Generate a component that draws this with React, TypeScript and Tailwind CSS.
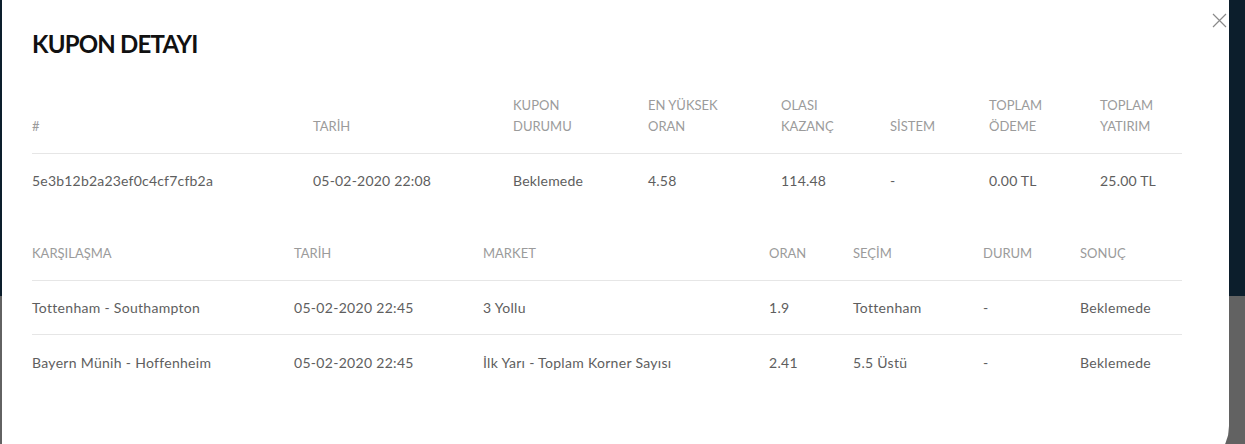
import React from 'react';

const couponCols = ['w-[281px]', 'w-[200px]', 'w-[135px]', 'w-[133px]', 'w-[109px]', 'w-[99px]', 'w-[111px]', 'w-[82px]'];
const couponHead: React.ReactNode[] = [
  '#',
  'TARİH',
  <>KUPON<br />DURUMU</>,
  <>EN YÜKSEK<br />ORAN</>,
  <>OLASI<br />KAZANÇ</>,
  'SİSTEM',
  <>TOPLAM<br />ÖDEME</>,
  <>TOPLAM<br />YATIRIM</>,
];
const couponRow = ['5e3b12b2a23ef0c4cf7cfb2a', '05-02-2020 22:08', 'Beklemede', '4.58', '114.48', '-', '0.00 TL', '25.00 TL'];

const matchCols = ['w-[262px]', 'w-[189px]', 'w-[286px]', 'w-[84px]', 'w-[130px]', 'w-[97px]', 'w-[102px]'];
const matchHead = ['KARŞILAŞMA', 'TARİH', 'MARKET', 'ORAN', 'SEÇİM', 'DURUM', 'SONUÇ'];
const matches = [
  ['Tottenham - Southampton', '05-02-2020 22:45', '3 Yollu', '1.9', 'Tottenham', '-', 'Beklemede'],
  ['Bayern Münih - Hoffenheim', '05-02-2020 22:45', 'İlk Yarı - Toplam Korner Sayısı', '2.41', '5.5 Üstü', '-', 'Beklemede'],
];

const App: React.FC = () => {
  return (
    <div className="w-[1245px] h-[444px] overflow-hidden relative font-['Lato',sans-serif]">
      {/* backdrop: dark header area over grey page */}
      <div className="absolute inset-0 flex flex-col">
        <div className="h-[296px] bg-[#0c1e2c]" />
        <div className="flex-1 bg-[#626262]" />
      </div>

      <div className="relative ml-[2px] w-[1227px] h-[470px] bg-white rounded-br-[44px] pt-[29px] px-[30px]">
        <button className="absolute top-[13px] right-[2px] p-0" aria-label="Kapat">
          <svg width="15" height="15" viewBox="0 0 15 15" fill="none" stroke="#8a8a8a" strokeWidth="1.2">
            <path d="M1 1l13 13M14 1L1 14" />
          </svg>
        </button>

        <h1 className="text-[24px] leading-[30px] font-bold tracking-[-0.8px] text-[#111]">KUPON DETAYI</h1>

        <div className="w-[1150px] text-[13px] leading-[21px]">
          <div className="flex items-end pt-[36px] pb-[16px] border-b border-[#e6e6e6] text-[#9b9b9b]">
            {couponHead.map((h, i) => (
              <div key={i} className={couponCols[i]}>{h}</div>
            ))}
          </div>
          <div className="flex items-center h-[54px] text-[#5e5e5e] text-[14px] tracking-[0.2px]">
            {couponRow.map((v, i) => (
              <div key={i} className={`${couponCols[i]} pb-[1px]`}>{v}</div>
            ))}
          </div>

          <div className="mt-[19px] flex items-center h-[54px] border-b border-[#e6e6e6] text-[#9b9b9b]">
            {matchHead.map((h, i) => (
              <div key={i} className={matchCols[i]}>{h}</div>
            ))}
          </div>
          {matches.map((row, r) => (
            <div key={r} className={`flex items-center h-[54px] text-[#5e5e5e] text-[14px] tracking-[0.3px] ${r < matches.length - 1 ? 'border-b border-[#e6e6e6]' : ''}`}>
              {row.map((v, i) => (
                <div key={i} className={matchCols[i]}>{v}</div>
              ))}
            </div>
          ))}
        </div>
      </div>
    </div>
  );
};

export default App;
